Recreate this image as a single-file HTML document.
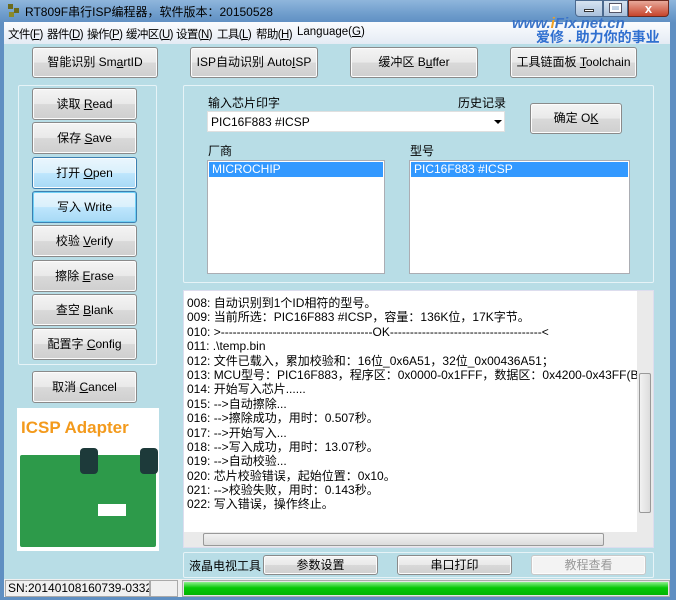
<!DOCTYPE html>
<html><head><meta charset="utf-8"><style>
*{box-sizing:border-box;margin:0;padding:0}
body{width:676px;height:600px;overflow:hidden;position:relative;background:#5f8fc2;font-family:"Liberation Sans","Noto Sans CJK SC",sans-serif;font-size:12px;color:#000}
.a{position:absolute}
.title{left:0;top:0;width:676px;height:23px;background:linear-gradient(#8fb6dc,#6f9dcc 60%,#5f8fc2)}
.client{left:4px;top:22px;width:666px;height:575px;background:#b8dde6}
.menu{left:4px;top:22px;width:666px;height:22px;background:linear-gradient(#fbfcfe,#e4ebf4)}
.m{position:absolute;top:26px;font-size:11.5px;letter-spacing:-0.6px;white-space:nowrap}
.btn{position:absolute;border:1px solid #8a8a8a;border-radius:3px;background:linear-gradient(#f4f4f4 0%,#e9e9e9 50%,#d9d9d9 51%,#cfcfcf 100%);text-align:center;font-size:12px;box-shadow:inset 0 0 0 1px #fcfcfc}
.blue{background:linear-gradient(#eaf6fd 0%,#d9f0fc 50%,#bee6fd 51%,#a7d9f5 100%);border-color:#3c7fb1}
.panel{position:absolute;border:1px solid #e6f3f7;border-radius:2px}
.box{position:absolute;background:#fff;border:1px solid #abadb3}
.sel{background:#3399ff;color:#fff;padding-left:3px;height:15px;line-height:15px;margin:1px}
.log div{height:14.4px;line-height:14.4px;white-space:nowrap}
u{text-decoration:underline}
</style></head><body>
<div class="a title"></div>
<div class="a" style="left:8px;top:4px;width:5px;height:5px;background:#6b6b1f"></div>
<div class="a" style="left:14px;top:8px;width:5px;height:5px;background:#6b6b1f"></div>
<div class="a" style="left:9px;top:12px;width:5px;height:5px;background:#8a8a2a"></div>
<div class="a" style="left:25px;top:3px;font-size:12px">RT809F串行ISP编程器，软件版本：20150528</div>
<div class="a" style="left:575px;top:0;width:28px;height:17px;background:linear-gradient(#d6e3f1,#a9c1dc);border:1px solid #4c6a8f;border-radius:0 0 0 4px"></div>
<div class="a" style="left:584px;top:9px;width:10px;height:3px;background:#fff;border:1px solid #333"></div>
<div class="a" style="left:603px;top:0;width:25px;height:17px;background:linear-gradient(#d6e3f1,#a9c1dc);border:1px solid #4c6a8f"></div>
<div class="a" style="left:610px;top:4px;width:11px;height:8px;border:2px solid #fff;outline:1px solid #556"></div>
<div class="a" style="left:628px;top:0;width:41px;height:17px;background:linear-gradient(#e8a99a,#c7442b);border:1px solid #6b2a20;border-radius:0 0 4px 0;color:#fff;font-weight:bold;text-align:center;font-size:13px;line-height:15px">x</div>
<div class="a client"></div>
<div class="a menu"></div>
<div class="m" style="left:8px">文件(<u>F</u>)</div>
<div class="m" style="left:47px">器件(<u>D</u>)</div>
<div class="m" style="left:87px">操作(<u>P</u>)</div>
<div class="m" style="left:126px">缓冲区(<u>U</u>)</div>
<div class="m" style="left:176px">设置(<u>N</u>)</div>
<div class="m" style="left:217px">工具(<u>L</u>)</div>
<div class="m" style="left:256px">帮助(<u>H</u>)</div>
<div class="m" style="left:297px;letter-spacing:0">Language(<u>G</u>)</div>
<div class="a" style="left:512px;top:15px;color:#3a73c8;font-style:italic;font-size:15px;font-weight:bold">www.<span style="color:#f0a020">i</span>Fix.net.cn</div>
<div class="a" style="left:536px;top:27px;color:#2f6fd0;font-size:14px;font-weight:bold">爱修 . 助力你的事业</div>

<div class="btn" style="left:32px;top:47px;width:126px;height:31px;line-height:29px">智能识别 Sm<u>a</u>rtID</div>
<div class="btn" style="left:190px;top:47px;width:128px;height:31px;line-height:29px">ISP自动识别 Auto<u>I</u>SP</div>
<div class="btn" style="left:350px;top:47px;width:128px;height:31px;line-height:29px">缓冲区 B<u>u</u>ffer</div>
<div class="btn" style="left:510px;top:47px;width:127px;height:31px;line-height:29px">工具链面板 <u>T</u>oolchain</div>

<div class="panel" style="left:18px;top:85px;width:139px;height:280px"></div>
<div class="btn" style="left:32px;top:88px;width:105px;height:32px;line-height:30px">读取 <u>R</u>ead</div>
<div class="btn" style="left:32px;top:122px;width:105px;height:32px;line-height:30px">保存 <u>S</u>ave</div>
<div class="btn blue" style="left:32px;top:157px;width:105px;height:32px;line-height:30px">打开 <u>O</u>pen</div>
<div class="btn blue" style="left:32px;top:191px;width:105px;height:32px;line-height:30px;box-shadow:inset 0 0 0 1px #6fd0f5">写入 Write</div>
<div class="btn" style="left:32px;top:225px;width:105px;height:32px;line-height:30px">校验 <u>V</u>erify</div>
<div class="btn" style="left:32px;top:260px;width:105px;height:32px;line-height:30px">擦除 <u>E</u>rase</div>
<div class="btn" style="left:32px;top:294px;width:105px;height:32px;line-height:30px">查空 <u>B</u>lank</div>
<div class="btn" style="left:32px;top:328px;width:105px;height:32px;line-height:30px">配置字 <u>C</u>onfig</div>
<div class="btn" style="left:32px;top:371px;width:105px;height:32px;line-height:30px">取消 <u>C</u>ancel</div>

<div class="a" style="left:17px;top:408px;width:142px;height:143px;background:#fff"></div>
<div class="a" style="left:21px;top:418px;color:#f39a1c;font-weight:bold;font-size:17px">ICSP Adapter</div>
<div class="a" style="left:20px;top:455px;width:136px;height:92px;background:#2d9a4a;border-radius:2px"></div>
<div class="a" style="left:80px;top:448px;width:18px;height:26px;background:#1d3a3a;border-radius:4px"></div>
<div class="a" style="left:140px;top:448px;width:18px;height:26px;background:#1d3a3a;border-radius:4px"></div>
<div class="a" style="left:98px;top:504px;width:28px;height:12px;background:#fff"></div>

<div class="panel" style="left:183px;top:85px;width:471px;height:198px"></div>
<div class="a" style="left:208px;top:94px">输入芯片印字</div>
<div class="a" style="left:458px;top:94px">历史记录</div>
<div class="box" style="left:207px;top:111px;width:298px;height:21px;border-color:#e0e0e0;padding:3px 3px;font-size:12px">PIC16F883 #ICSP</div>
<div class="a" style="left:494px;top:120px;border:4px solid transparent;border-top:4px solid #000"></div>
<div class="btn" style="left:530px;top:103px;width:92px;height:31px;line-height:29px">确定 O<u>K</u></div>
<div class="a" style="left:208px;top:142px">厂商</div>
<div class="a" style="left:410px;top:142px">型号</div>
<div class="box" style="left:207px;top:160px;width:178px;height:114px"><div class="sel">MICROCHIP</div></div>
<div class="box" style="left:409px;top:160px;width:221px;height:114px"><div class="sel">PIC16F883 #ICSP</div></div>

<div class="box log" style="left:183px;top:290px;width:471px;height:258px;border-color:#dde;padding:5px 0 0 3px;overflow:hidden">
<div>008: 自动识别到1个ID相符的型号。</div>
<div>009: 当前所选：PIC16F883 #ICSP，容量：136K位，17K字节。</div>
<div>010: &gt;--------------------------------------OK--------------------------------------&lt;</div>
<div>011: .\temp.bin</div>
<div>012: 文件已载入，累加校验和：16位_0x6A51，32位_0x00436A51；</div>
<div>013: MCU型号：PIC16F883，程序区：0x0000-0x1FFF，数据区：0x4200-0x43FF(BYTE)</div>
<div>014: 开始写入芯片......</div>
<div>015: --&gt;自动擦除...</div>
<div>016: --&gt;擦除成功，用时：0.507秒。</div>
<div>017: --&gt;开始写入...</div>
<div>018: --&gt;写入成功，用时：13.07秒。</div>
<div>019: --&gt;自动校验...</div>
<div>020: 芯片校验错误，起始位置：0x10。</div>
<div>021: --&gt;校验失败，用时：0.143秒。</div>
<div>022: 写入错误，操作终止。</div>
</div>
<div class="a" style="left:637px;top:291px;width:16px;height:241px;background:#eaeaea"></div>
<div class="a" style="left:639px;top:373px;width:12px;height:140px;background:linear-gradient(90deg,#f2f2f2,#dcdcdc);border:1px solid #999;border-radius:2px"></div>
<div class="a" style="left:184px;top:532px;width:453px;height:15px;background:#eaeaea"></div>
<div class="a" style="left:203px;top:533px;width:401px;height:13px;background:linear-gradient(#f2f2f2,#dcdcdc);border:1px solid #999;border-radius:2px"></div>
<div class="a" style="left:637px;top:532px;width:16px;height:15px;background:#eaeaea"></div>

<div class="panel" style="left:183px;top:552px;width:471px;height:26px"></div>
<div class="a" style="left:189px;top:557px">液晶电视工具</div>
<div class="btn" style="left:263px;top:555px;width:115px;height:20px;line-height:18px">参数设置</div>
<div class="btn" style="left:397px;top:555px;width:115px;height:20px;line-height:18px">串口打印</div>
<div class="btn" style="left:531px;top:555px;width:115px;height:20px;line-height:18px;color:#999;border-color:#c8c8c8;background:#f3f3f3">教程查看</div>

<div class="a" style="left:4px;top:579px;width:666px;height:18px;background:#f0f0f0"></div>
<div class="a" style="left:5px;top:580px;width:145px;height:17px;border:1px solid #aaa;font-size:12px;line-height:15px;padding-left:2px;white-space:nowrap;overflow:hidden">SN:20140108160739-0332</div>
<div class="a" style="left:150px;top:580px;width:28px;height:17px;border:1px solid #aaa"></div>
<div class="a" style="left:182px;top:580px;width:488px;height:17px;border:1px solid #aaa;background:#e6e6e6"></div>
<div class="a" style="left:184px;top:582px;width:484px;height:13px;background:linear-gradient(#8ef08e,#06c806 45%,#02b402)"></div>
</body></html>
